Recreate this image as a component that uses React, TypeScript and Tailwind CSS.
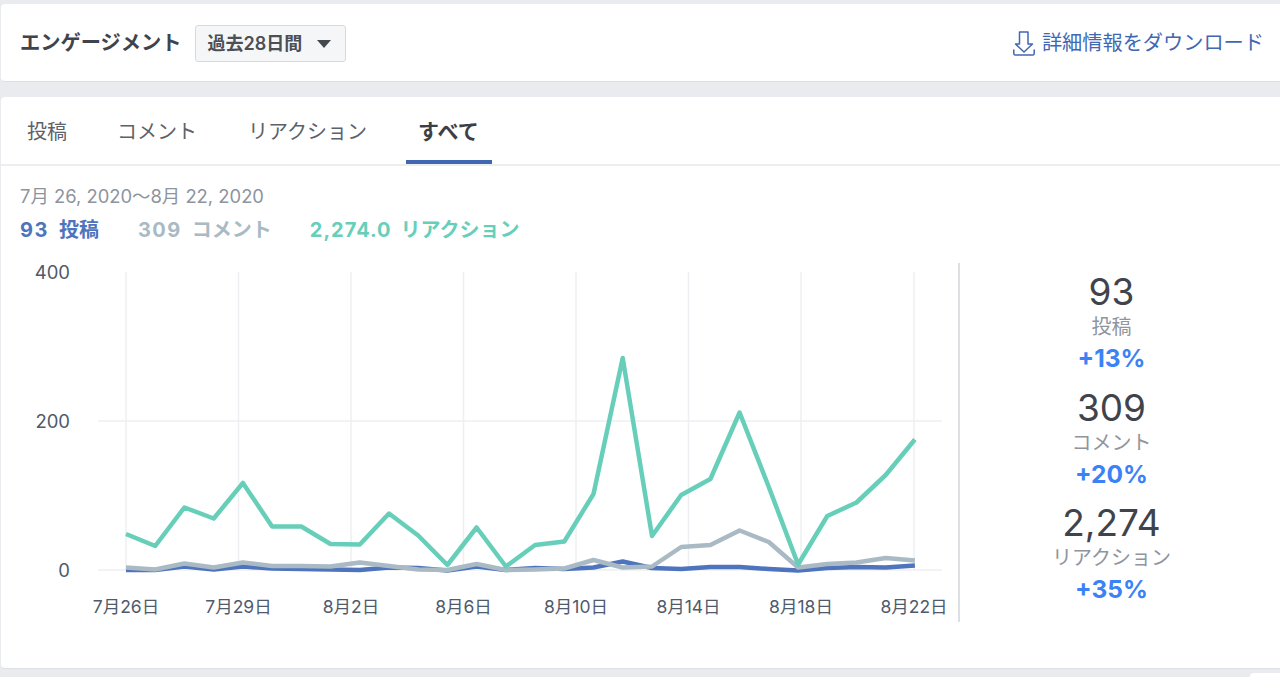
const teal = [534, 546, 507.5, 518.5, 483, 526.5, 526.5, 544, 544.5, 513.5, 535.5, 565, 527.5, 566.5, 545, 541.5, 494, 358, 536, 495, 479, 412.5, 487, 564.5, 516, 502.5, 475, 439.5];
const gray = [567.5, 569.5, 563.5, 567.5, 562.5, 566, 566, 566.5, 562.5, 566, 569.5, 570, 564, 570, 569.5, 568.5, 560, 567.5, 566.5, 547, 545, 530.5, 542, 567.5, 564, 562.5, 558, 560.5];
const blue = [570, 570, 566.5, 569.5, 566.5, 568.5, 569, 569.5, 570, 567.5, 568, 570.5, 566.5, 570, 568, 569, 567.5, 561.5, 568, 569, 567, 567, 569, 570.5, 568, 567, 567.5, 565.5];

const toPoints = (ys: number[]) =>
  ys.map((y, i) => `${(126 + i * 29.22).toFixed(1)},${y}`).join(" ");

const xLabels = [
  { x: 126, label: "7月26日" },
  { x: 238.5, label: "7月29日" },
  { x: 351, label: "8月2日" },
  { x: 463.5, label: "8月6日" },
  { x: 576, label: "8月10日" },
  { x: 688.5, label: "8月14日" },
  { x: 801, label: "8月18日" },
  { x: 914, label: "8月22日" },
];

const yLabels = [
  { y: 272, label: "400" },
  { y: 421, label: "200" },
  { y: 570, label: "0" },
];

const stats = [
  { value: "93", label: "投稿", change: "+13%" },
  { value: "309", label: "コメント", change: "+20%" },
  { value: "2,274", label: "リアクション", change: "+35%" },
];

function Chart() {
  return (
    <svg width="960" height="360" viewBox="1 263 960 360" className="block shrink-0 overflow-visible">
      {xLabels.map((t) => (
        <line key={t.x} x1={t.x} x2={t.x} y1="272" y2="570" stroke="#eeeff2" strokeWidth="1.5" />
      ))}
      {yLabels.slice(1).map((t) => (
        <line key={t.y} x1="98" x2="942" y1={t.y} y2={t.y} stroke="#eeeff2" strokeWidth="1.5" />
      ))}
      <polyline points={toPoints(blue)} fill="none" stroke="#4e74bd" strokeWidth="4.5" strokeLinejoin="round" />
      <polyline points={toPoints(gray)} fill="none" stroke="#a9bac4" strokeWidth="4.5" strokeLinejoin="round" />
      <polyline points={toPoints(teal)} fill="none" stroke="#67cfb9" strokeWidth="4.5" strokeLinejoin="round" />
      {yLabels.map((t) => (
        <text key={t.y} x="70" y={t.y + 7} textAnchor="end" fontSize="18.5" fill="#4f5a6b">
          {t.label}
        </text>
      ))}
      {xLabels.map((t) => (
        <text key={t.x} x={t.x} y="613" textAnchor="middle" fontSize="17.5" fill="#4f5a6b">
          {t.label}
        </text>
      ))}
    </svg>
  );
}

export default function App() {
  return (
    <div
      className="h-[677px] w-[1280px] overflow-hidden bg-[#e9ebee] pt-1 pl-px text-[#1d2129]"
      style={{ fontFamily: 'Inter, "Noto Sans CJK JP", sans-serif' }}
    >
      {/* Header */}
      <header className="flex h-[78px] items-center justify-between rounded-l border-b border-[#dddfe2] bg-white pt-[2px] pr-4 pl-[19px]">
        <div className="flex items-center gap-[13px]">
          <h1 className="text-[20.250px] font-bold text-[#3f444c]">エンゲージメント</h1>
          <button className="flex h-[37px] w-[151px] items-center gap-[15px] rounded-[3px] border border-[#d6d9dd] bg-[#f5f6f7] pl-3 text-[18px] font-semibold whitespace-nowrap text-[#4b4f56]">
            過去28日間
            <span className="h-0 w-0 border-x-[7px] border-t-[8px] border-x-transparent border-t-[#444950]" />
          </button>
        </div>
        <a className="flex items-center gap-[7px] text-[20.200px] text-[#4267b2]">
          <svg width="22" height="25" viewBox="0 0 22 25" fill="none" stroke="#4267b2" strokeWidth="1.5">
            <path d="M6.500 1h8.500v12h4.500l-8.500 8-8.500-8h4z" strokeLinejoin="round" />
            <path d="M.8 19v3.500q0 1.500 1.500 1.500h17.400q1.500 0 1.500-1.500v-3.500" strokeLinecap="round" />
          </svg>
          詳細情報をダウンロード
        </a>
      </header>

      {/* Main card */}
      <section className="mt-[15px] h-[572px] rounded-l border-b border-[#dddfe2] bg-white">
        <nav className="flex h-[69px] items-stretch border-b-2 border-[#eceef0] pl-[26px] text-[20px] text-[#5d6168]">
          <a className="flex items-center pt-[2px]">投稿</a>
          <a className="ml-[50px] flex items-center pt-[2px]">コメント</a>
          <a className="ml-[51px] flex items-center pt-[2px]">リアクション</a>
          <a className="relative ml-[51px] flex items-center pt-[2px] text-[21px] font-bold text-[#3c4046]">
            すべて
            <span className="absolute -right-[13px] bottom-0 -left-[12px] h-1 bg-[#4267b2]" />
          </a>
        </nav>

        <div className="pt-[20px] pl-[19px]">
          <p className="h-[21px] text-[18.400px] leading-[21px] text-[#8d949e]">7月 26, 2020〜8月 22, 2020</p>
          <div className="mt-[12px] flex h-[22px] items-center text-[20px] leading-[22px] font-bold">
            <span className="flex gap-[10px] text-[#4e74bd]">
              <span className="tracking-[1.5px]">93</span>投稿
            </span>
            <span className="ml-[39px] flex gap-[10px] text-[#a9bac4]">
              <span className="tracking-[1.5px]">309</span>コメント
            </span>
            <span className="ml-[38px] flex gap-[9px] text-[#67cfb9]">
              <span className="tracking-[1px]">2,274.0</span>リアクション
            </span>
          </div>
        </div>

        <div className="mt-[22px] flex">
          <Chart />
          <div className="h-[359px] w-[2px] shrink-0 -translate-x-[3px] bg-[#dddfe2]" />
          <div className="flex w-[297px] flex-col items-center pt-[7px]">
            {stats.map((s) => (
              <div key={s.label} className="mb-[13.500px] flex flex-col items-center">
                <div className="text-[37px] leading-[44px] text-[#3f444c]">{s.value}</div>
                <div className="text-[20px] leading-[26px] text-[#90949c]">{s.label}</div>
                <div className="mt-1 text-[24.500px] leading-[28px] font-bold text-[#3b82f6]">{s.change}</div>
              </div>
            ))}
          </div>
        </div>
      </section>
      <div className="mt-1 ml-auto h-1 w-[30px] rounded-tl bg-white" />
    </div>
  );
}
